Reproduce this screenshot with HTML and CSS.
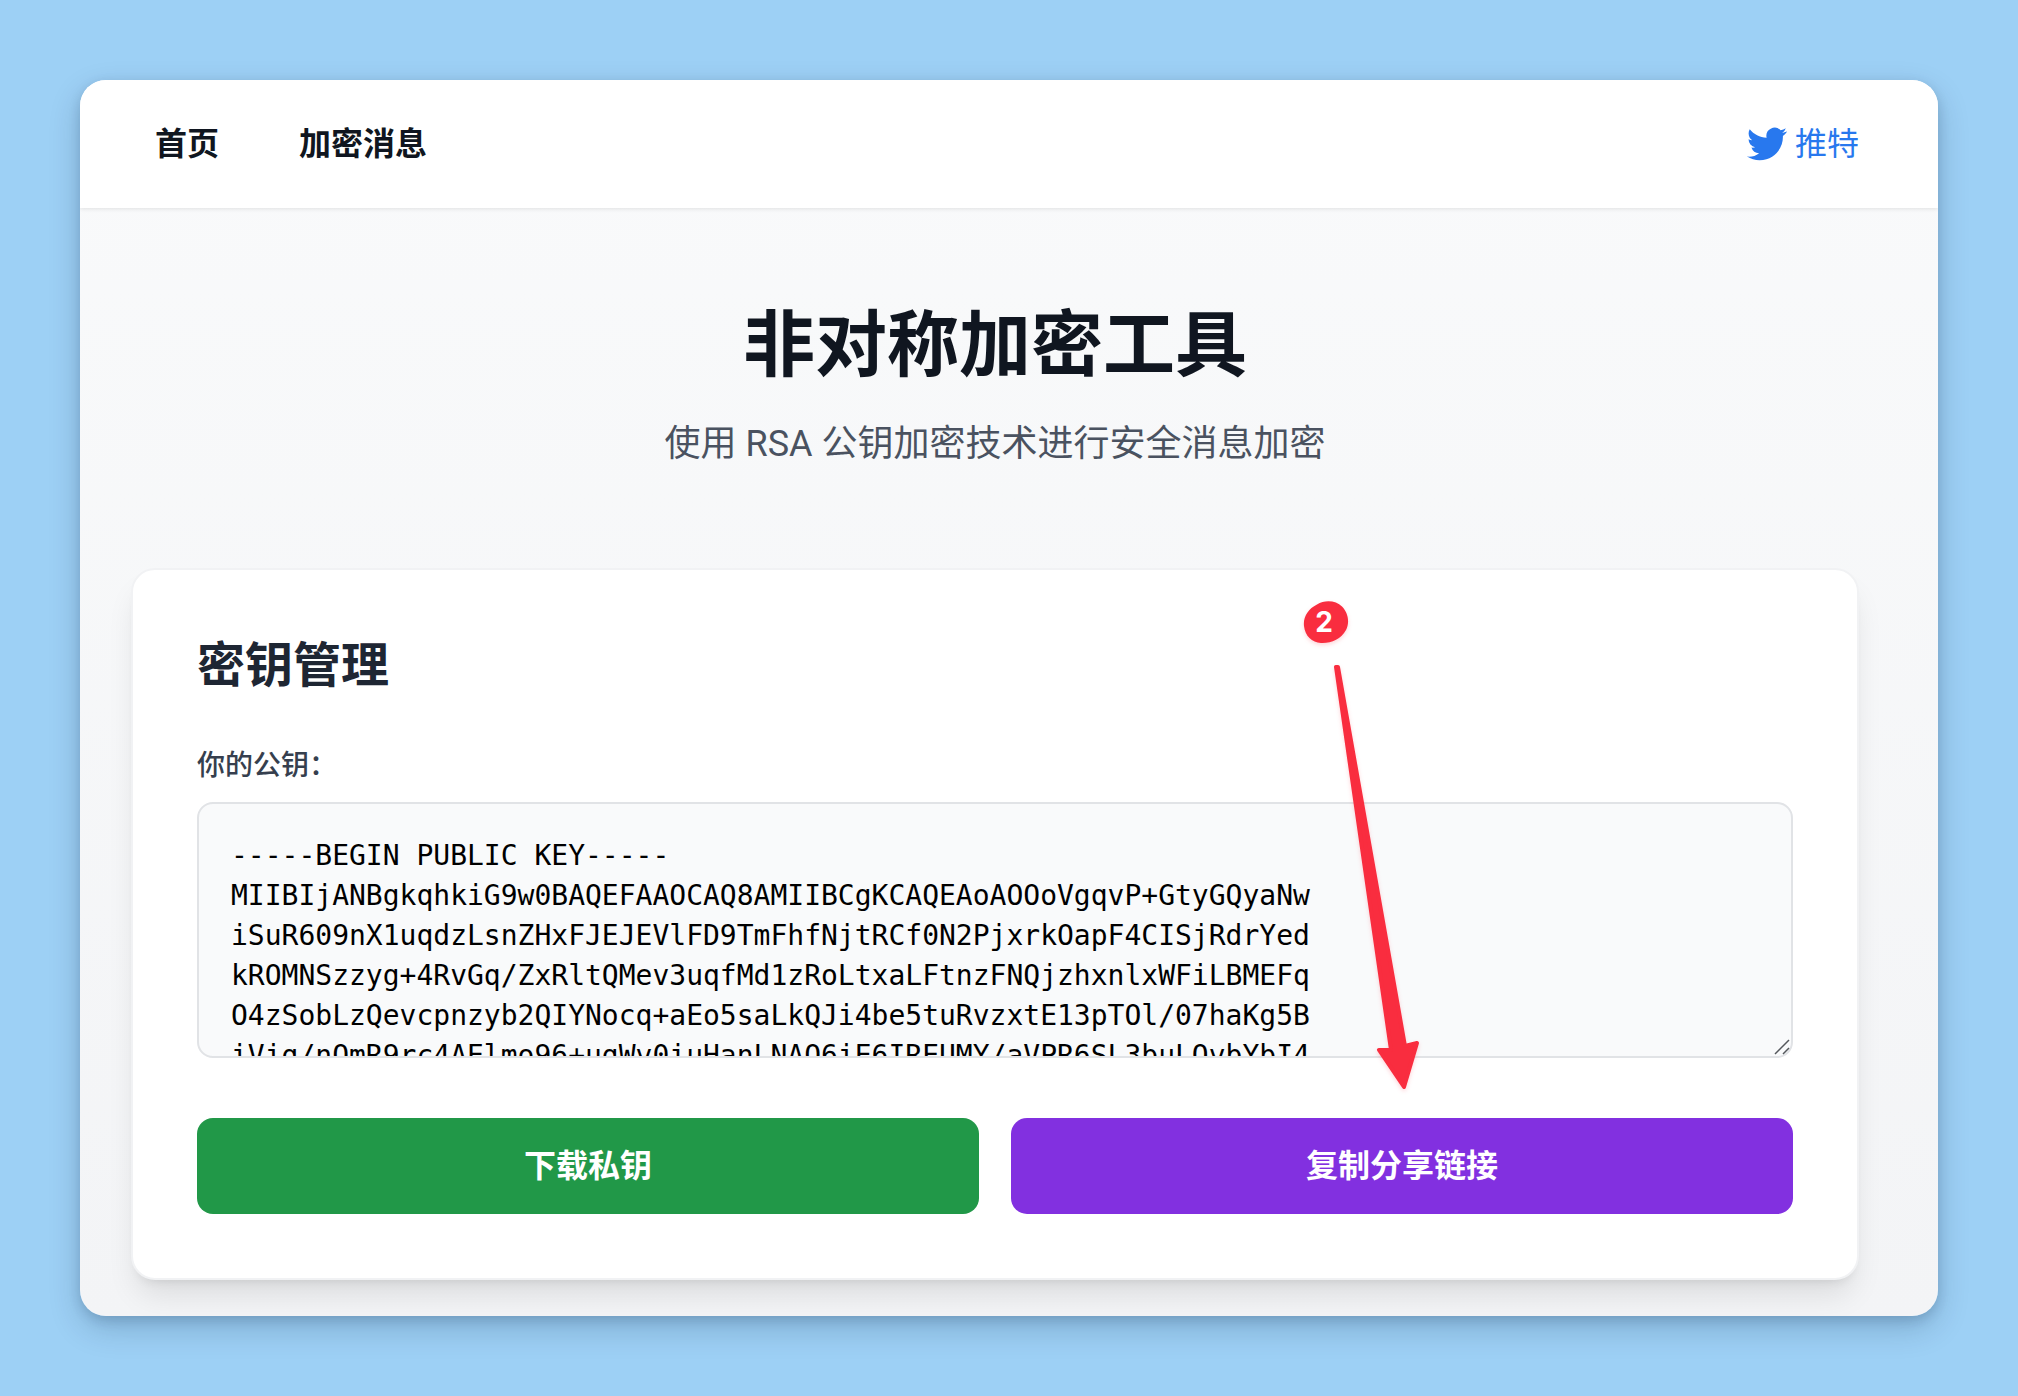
FILE: index.html
```html
<!DOCTYPE html>
<html lang="zh-CN">
<head>
<meta charset="utf-8">
<meta name="viewport" content="width=device-width, initial-scale=1">
<title>非对称加密工具</title>
<link rel="stylesheet" href="styles.css">
</head>
<body>
<div class="window">
  <header class="header">
    <nav class="nav">
      <a class="nav-link" href="#home">首页</a>
      <a class="nav-link" href="#encrypt">加密消息</a>
    </nav>
    <a class="twitter" href="#twitter">
      <svg class="twitter-icon" viewBox="0 0 24 24" aria-hidden="true"><path fill="currentColor" d="M23.953 4.57a10 10 0 01-2.825.775 4.958 4.958 0 002.163-2.723c-.951.555-2.005.959-3.127 1.184a4.92 4.92 0 00-8.384 4.482C7.69 8.095 4.067 6.13 1.64 3.162a4.822 4.822 0 00-.666 2.475c0 1.71.87 3.213 2.188 4.096a4.904 4.904 0 01-2.228-.616v.06a4.923 4.923 0 003.946 4.827 4.996 4.996 0 01-2.212.085 4.936 4.936 0 004.604 3.417 9.867 9.867 0 01-6.102 2.105c-.39 0-.779-.023-1.17-.067a13.995 13.995 0 007.557 2.209c9.053 0 13.998-7.496 13.998-13.985 0-.21 0-.42-.015-.63A9.935 9.935 0 0024 4.59z"/></svg>
      <span>推特</span>
    </a>
  </header>
  <main class="main">
    <div class="hero">
      <h1 class="title">非对称加密工具</h1>
      <p class="subtitle">使用 RSA 公钥加密技术进行安全消息加密</p>
    </div>
    <section class="card">
      <h2 class="card-title">密钥管理</h2>
      <label class="label" for="public-key">你的公钥：</label>
      <div class="key-field">
        <textarea class="key" id="public-key" readonly spellcheck="false">-----BEGIN PUBLIC KEY-----
MIIBIjANBgkqhkiG9w0BAQEFAAOCAQ8AMIIBCgKCAQEAoAOOoVgqvP+GtyGQyaNw
iSuR609nX1uqdzLsnZHxFJEJEVlFD9TmFhfNjtRCf0N2PjxrkOapF4CISjRdrYed
kROMNSzzyg+4RvGq/ZxRltQMev3uqfMd1zRoLtxaLFtnzFNQjzhxnlxWFiLBMEFq
O4zSobLzQevcpnzyb2QIYNocq+aEo5saLkQJi4be5tuRvzxtE13pTOl/07haKg5B
iVig/nQmR9rc4AElmo96+ugWv0iuHanLNAO6iE6IREUMY/aVPR6SL3buLQvbYbI4</textarea>
        <svg class="grip" viewBox="0 0 16 16" aria-hidden="true"><path d="M1 15 15 1M9 15 15 9" fill="none" stroke="#55585d" stroke-width="1.5"/></svg>
      </div>
      <div class="actions">
        <button class="button button-green" type="button">下载私钥</button>
        <button class="button button-purple" type="button">复制分享链接</button>
      </div>
      <div class="callout">
        <svg class="callout-art" viewBox="0 0 160 500" aria-hidden="true">
          <path fill="#f92d3f" d="M14 4.500C22-.5 33 .5 39 6.500 45 12.500 47 22 43 30 38 39 28 43.500 18 43 9 42.500 2 36 1 26 0 17 5 9 14 4.500z"/>
          <path fill="#f92d3f" stroke="#f92d3f" stroke-width="4" stroke-linejoin="round" d="M34 67 35 67 102 446 114 443 101 487 76 450 88 450 33 67z"/>
        </svg>
        <span class="callout-number">2</span>
      </div>
    </section>
  </main>
</div>
</body>
</html>
```
FILE: styles.css
```css
* {
  box-sizing: border-box;
}

body {
  margin: 0;
  min-height: 100vh;
  padding: 80px;
  display: flex;
  background: #9dd0f5;
  font-family: Roboto, "Noto Sans CJK SC", sans-serif;
  color: #101620;
}

.window {
  flex: 1;
  min-width: 0;
  border-radius: 26px;
  overflow: hidden;
  background: linear-gradient(#f9fafb, #f3f4f6);
  box-shadow: 0 12px 32px rgba(0, 30, 60, 0.2), 0 4px 12px rgba(0, 30, 60, 0.15);
}

.header {
  height: 128px;
  padding: 0 79px 0 75px;
  display: flex;
  align-items: center;
  justify-content: space-between;
  position: relative;
  background: #fff;
  box-shadow: 0 1px 4px rgba(0, 0, 0, 0.1);
  font-size: 32px;
  line-height: 48px;
}

.nav {
  display: flex;
  gap: 80px;
}

.nav-link {
  color: #101620;
  font-weight: 700;
  text-decoration: none;
}

.twitter {
  display: flex;
  align-items: center;
  gap: 8px;
  color: #2878ee;
  text-decoration: none;
}

.twitter-icon {
  width: 40px;
  height: 40px;
}

.main {
  padding: 98px 79px 36px 51px;
}

.hero {
  margin-bottom: 96px;
  text-align: center;
}

.title {
  margin: 0 0 30px;
  font-size: 72px;
  line-height: 80px;
  font-weight: 700;
}

.subtitle {
  margin: 0;
  color: #4a5260;
  font-size: 36px;
  line-height: 56px;
}

.card {
  position: relative;
  padding: 64px;
  border: 2px solid #f1f2f4;
  border-radius: 24px;
  background: #fff;
  box-shadow: 0 20px 30px -6px rgba(0, 0, 0, 0.1), 0 8px 12px -8px rgba(0, 0, 0, 0.12);
}

.card-title {
  margin: 0 0 48px;
  color: #1e2633;
  font-size: 48px;
  line-height: 64px;
  font-weight: 700;
}

.label {
  display: block;
  margin-bottom: 16px;
  color: #363f4e;
  font-size: 28px;
  line-height: 40px;
  font-weight: 500;
}

.key-field {
  position: relative;
  margin-bottom: 60px;
}

.key {
  display: block;
  width: 100%;
  height: 256px;
  padding: 32px;
  border: 2px solid #e1e3e6;
  border-radius: 16px;
  outline: 0;
  overflow: hidden;
  resize: none;
  background: #f9fafb;
  color: #000;
  font-family: "DejaVu Sans Mono", monospace;
  font-size: 28px;
  line-height: 40px;
  white-space: pre;
}

.grip {
  position: absolute;
  right: 3px;
  bottom: 3px;
  width: 16px;
  height: 16px;
}

.actions {
  display: grid;
  grid-template-columns: 1fr 1fr;
  gap: 32px;
}

.button {
  padding: 24px;
  border: 0;
  border-radius: 16px;
  color: #fff;
  font-family: inherit;
  font-size: 32px;
  line-height: 48px;
  font-weight: 700;
}

.button-green {
  background: #219848;
}

.button-purple {
  background: #8230e0;
}

.callout {
  position: absolute;
  top: 30px;
  right: 394px;
  width: 160px;
  height: 500px;
  pointer-events: none;
}

.callout-art {
  display: block;
  width: 100%;
  height: 100%;
  filter: drop-shadow(0 2px 2px rgba(249, 45, 63, 0.2));
}

.callout-number {
  position: absolute;
  top: 0;
  left: 0;
  width: 42px;
  color: #fff;
  font-family: Inter, sans-serif;
  font-size: 28px;
  line-height: 44px;
  font-weight: 700;
  text-align: center;
}
```
